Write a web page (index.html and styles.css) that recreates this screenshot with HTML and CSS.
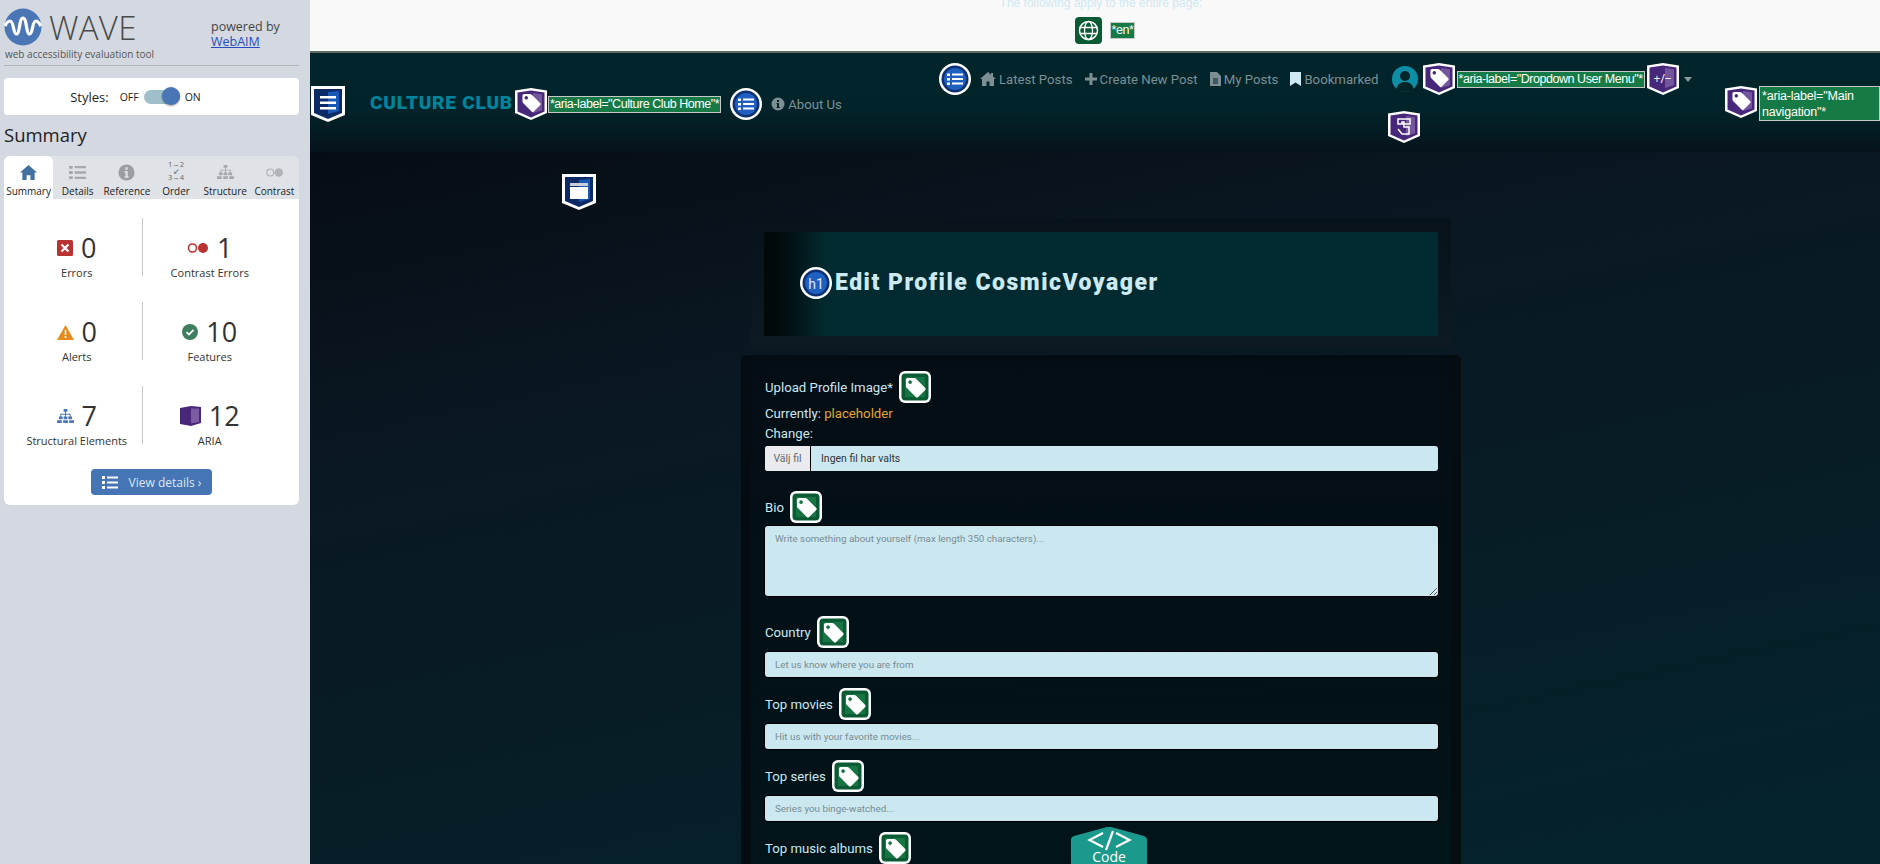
FILE: index.html
```html
<!DOCTYPE html>
<html lang="en">
<head>
<meta charset="utf-8">
<title>WAVE - Culture Club</title>
<link rel="stylesheet" href="styles.css">
</head>
<body>
<svg class="defs" width="0" height="0" aria-hidden="true">
  <defs>
    <path id="tagshape" fill-rule="evenodd" d="M9 7h7q1 0 2 1l10 10q1 1 0 2l-8 8q-1 1-2 0L8 18q-1-1-1-2V9q0-2 2-2zM11.500 9.500a2 2 0 1 0 .01 0z"/>
    <symbol id="shield-purple" viewBox="0 0 32 32">
      <path fill="#fff" d="M0 2.500 16 0l16 2.500V25l-16 7-16-7z"/>
      <path fill="#47277a" d="M2.500 4.500 16 2.500l13.500 2V23.500L16 29.500 2.500 23.500z"/>
      <path fill="#74569c" d="M18 5l9 1.200v16L18 25z"/>
    </symbol>
    <symbol id="shield-navy" viewBox="0 0 34 36">
      <path fill="#fff" d="M0 0h34v29l-17 7-17-7z"/>
      <path fill="#0c2a66" d="M3 3h28v24l-14 6-14-6z"/>
      <path fill="#1a58b5" d="M17 6l11-1v20l-11 3z"/>
    </symbol>
    <symbol id="circle-blue" viewBox="0 0 32 32">
      <circle cx="16" cy="16" r="16" fill="#fff"/>
      <circle cx="16" cy="16" r="13.500" fill="#0d2f73"/>
      <circle cx="16" cy="16" r="11" fill="#1f5fc0"/>
    </symbol>
    <symbol id="green-tag" viewBox="0 0 32 32">
      <rect x="0" y="0" width="32" height="32" rx="6" fill="#fff"/>
      <rect x="2.500" y="2.500" width="27" height="27" rx="4" fill="#0a5a33"/>
      <rect x="6" y="6" width="20" height="20" fill="#177443"/>
      <use href="#tagshape" fill="#fff" transform="translate(0.500 0.500) scale(.92)"/>
    </symbol>
    <symbol id="purple-tag" viewBox="0 0 32 32">
      <use href="#shield-purple" width="32" height="32"/>
      <use href="#tagshape" fill="#fff" transform="translate(1.500 0) scale(.85)"/>
    </symbol>
  </defs>
</svg>

<div class="layout">
  <aside class="sidebar">
    <header class="brandbar">
      <div class="wave-logo">
        <div class="wave-top">
          <svg class="wave-mark" viewBox="0 0 38 38"><circle cx="19" cy="19" r="18.500" fill="#4a76b6"/><path d="M1 18C3 14 4 13 6 13c4 0 3 13 6.500 13s2.500-16 6.500-16 3 16 6.500 16S28 13 32 13c2 0 3 2 5 5" fill="none" stroke="#fff" stroke-width="3.200"/></svg>
          <span class="wave-word">WAVE</span>
        </div>
        <div class="wave-sub">web accessibility evaluation tool</div>
      </div>
      <div class="powered">powered by<br><a href="#" class="powered-link">WebAIM</a></div>
    </header>
    <div class="styles-card">
      <span class="styles-label">Styles:</span>
      <span class="styles-state">OFF</span>
      <span class="toggle"><span class="knob"></span></span>
      <span class="styles-state">ON</span>
    </div>
    <h2 class="summary-title">Summary</h2>
    <nav class="tabs">
      <div class="tab tab-active">
        <svg class="tab-icon" viewBox="0 0 18 16"><path fill="#44709f" d="M9 0 0 8h2.500v8H7v-5h4v5h4.500V8H18z"/></svg>
        <span>Summary</span>
      </div>
      <div class="tab">
        <svg class="tab-icon" viewBox="0 0 18 16"><path fill="#a5a9ad" d="M0 1h4v3H0zM6 1h12v2.500H6zM0 6.500h4v3H0zM6 6.800h12v2.500H6zM0 12h4v3H0zM6 12.500h12V15H6z"/></svg>
        <span>Details</span>
      </div>
      <div class="tab">
        <svg class="tab-icon" viewBox="0 0 18 18"><circle cx="9" cy="9" r="8.500" fill="#9a9ea2"/><path fill="#e0e3e7" d="M7.800 3.500h2.400V6H7.800zM7 7.500h3.200V13h1v1.500H7V13h1V9H7z"/></svg>
        <span>Reference</span>
      </div>
      <div class="tab">
        <span class="order-icon">1→2<br>↙<br>3→4</span>
        <span>Order</span>
      </div>
      <div class="tab">
        <svg class="tab-icon" viewBox="0 0 18 16"><path fill="#a5a9ad" d="M7 0h4v3H7zM8.500 3h1v2h5v3h-1V6h-4v2h-1V6h-4v2h-1V5h5zM2 8h4v3H2zM7 8h4v3H7zM12 8h4v3h-4zM0 12h5v3H0zM6.500 12h5v3h-5zM13 12h5v3h-5z"/></svg>
        <span>Structure</span>
      </div>
      <div class="tab">
        <svg class="tab-icon" viewBox="0 0 18 10"><circle cx="4.500" cy="5" r="3.700" fill="none" stroke="#b0b4b8" stroke-width="1.200"/><circle cx="13.500" cy="5" r="4.500" fill="#b0b4b8"/></svg>
        <span>Contrast</span>
      </div>
    </nav>
    <section class="panel">
      <div class="stats">
        <div class="stat stat-left">
          <div class="stat-top">
            <svg class="stat-icon" viewBox="0 0 16 16"><rect width="16" height="16" rx="1.500" fill="#b93333"/><path stroke="#fff" stroke-width="2.200" d="M4.500 4.500l7 7M11.500 4.500l-7 7"/></svg>
            <span class="stat-num">0</span>
          </div>
          <div class="stat-label">Errors</div>
        </div>
        <div class="stat stat-right">
          <div class="stat-top">
            <svg class="stat-icon stat-icon-wide" viewBox="0 0 22 12"><circle cx="5.500" cy="6" r="4" fill="none" stroke="#b93333" stroke-width="1.600"/><circle cx="16" cy="6" r="5" fill="#b93333"/></svg>
            <span class="stat-num">1</span>
          </div>
          <div class="stat-label">Contrast Errors</div>
        </div>
        <div class="stat stat-left">
          <div class="stat-top">
            <svg class="stat-icon stat-icon-alert" viewBox="0 0 17 15"><path fill="#e68a1c" d="M8.500 0 17 15H0z"/><path fill="#fff" d="M7.700 5h1.600v5H7.700zM7.700 11h1.600v2H7.700z"/></svg>
            <span class="stat-num">0</span>
          </div>
          <div class="stat-label">Alerts</div>
        </div>
        <div class="stat stat-right">
          <div class="stat-top">
            <svg class="stat-icon" viewBox="0 0 16 16"><circle cx="8" cy="8" r="8" fill="#3f7f60"/><path d="M4.500 8.200l2.500 2.400 4.500-4.700" fill="none" stroke="#fff" stroke-width="1.800"/></svg>
            <span class="stat-num">10</span>
          </div>
          <div class="stat-label">Features</div>
        </div>
        <div class="stat stat-left">
          <div class="stat-top">
            <svg class="stat-icon stat-icon-alert" viewBox="0 0 18 16"><path fill="#4a76b6" d="M7 0h4v3H7zM8.500 3h1v2h5v3h-1V6h-4v2h-1V6h-4v2h-1V5h5zM2 8h4v3H2zM7 8h4v3H7zM12 8h4v3h-4zM0 12h5v3H0zM6.500 12h5v3h-5zM13 12h5v3h-5z"/></svg>
            <span class="stat-num">7</span>
          </div>
          <div class="stat-label">Structural Elements</div>
        </div>
        <div class="stat stat-right">
          <div class="stat-top">
            <svg class="stat-icon stat-icon-aria" viewBox="0 0 21 20"><path fill="#47277a" d="M0 2 11 0l10 1v16l-10 3-11-2z"/><path fill="#7b5ca3" d="M11 2.500h8V16l-8 1.500z"/></svg>
            <span class="stat-num">12</span>
          </div>
          <div class="stat-label">ARIA</div>
        </div>
      </div>
      <button class="details-btn" type="button">
        <svg class="details-icon" viewBox="0 0 16 13"><path fill="#fff" d="M0 0h3v3H0zM5 .500h11v2H5zM0 5h3v3H0zM5 5.500h11v2H5zM0 10h3v3H0zM5 10.500h11v2H5z"/></svg>
        View details ›
      </button>
    </section>
  </aside>

  <main class="page">
    <div class="doc-note">
      <p class="doc-note-text">The following apply to the entire page:</p>
      <div class="doc-note-row">
        <svg class="globe" viewBox="0 0 27 27"><rect width="27" height="27" rx="4" fill="#0a5a33"/><circle cx="13.500" cy="13.500" r="9" fill="none" stroke="#fff" stroke-width="1.500"/><ellipse cx="13.500" cy="13.500" rx="4" ry="9" fill="none" stroke="#fff" stroke-width="1.300"/><path stroke="#fff" stroke-width="1.300" d="M5 10.500h17M5 16.500h17"/></svg>
        <span class="wave-label">*en*</span>
      </div>
    </div>

    <nav class="topnav">
      <div class="nav-left">
        <svg class="nav-shield" viewBox="0 0 34 36" aria-hidden="true">
          <use href="#shield-navy" width="34" height="36"/>
          <path fill="#fff" d="M9 10h16v2.500H9zM9 15.500h16V18H9zM9 21h16v2.500H9z"/>
        </svg>
        <span class="brand">CULTURE CLUB</span>
        <svg class="shield-sm" aria-hidden="true"><use href="#purple-tag"/></svg>
        <span class="wave-label">*aria-label="Culture Club Home"*</span>
        <svg class="circle-icon" viewBox="0 0 32 32" aria-hidden="true">
          <use href="#circle-blue" width="32" height="32"/>
          <path fill="#fff" d="M8 10.500h3v2.500H8zM13 10.500h11v2H13zM8 15h3v2.500H8zM13 15h11v2H13zM8 19.500h3V22H8zM13 19.500h11v2H13z"/>
        </svg>
        <a class="nav-link nav-about" href="#">
          <svg class="nav-ico-info" viewBox="0 0 14 14"><circle cx="7" cy="7" r="6.500" fill="#7d8f94"/><path fill="#02252a" d="M6 3h2v2H6zM5.500 6H8v4h1v1H5.500v-1H6V7h-.5z"/></svg>
          About Us
        </a>
      </div>

      <div class="nav-menu">
        <svg class="circle-icon" viewBox="0 0 32 32" aria-hidden="true">
          <use href="#circle-blue" width="32" height="32"/>
          <path fill="#fff" d="M8 10.500h3v2.500H8zM13 10.500h11v2H13zM8 15h3v2.500H8zM13 15h11v2H13zM8 19.500h3V22H8zM13 19.500h11v2H13z"/>
        </svg>
        <a class="nav-link" href="#">
          <svg class="nav-ico-home" viewBox="0 0 16 14"><path fill="#7d8f94" d="M8 0 0 7h2v7h4.500V9.500h3V14H14V7h2l-3-2.600V1h-2v1.700z"/></svg>
          Latest Posts
        </a>
        <a class="nav-link" href="#">
          <svg class="nav-ico-plus" viewBox="0 0 12 12"><path fill="#7d8f94" d="M4.500 0h3v4.500H12v3H7.500V12h-3V7.500H0v-3h4.500z"/></svg>
          Create New Post
        </a>
        <a class="nav-link" href="#">
          <svg class="nav-ico-doc" viewBox="0 0 11 14"><path fill="#7d8f94" d="M0 0h7l4 4v10H0z"/><path stroke="#02252a" d="M3 7h5M3 9h5M3 11h5"/></svg>
          My Posts
        </a>
        <a class="nav-link" href="#">
          <svg class="nav-ico-mark" viewBox="0 0 11 14"><path fill="#cde9f2" d="M0 0h11v14l-5.500-3.500L0 14z"/></svg>
          Bookmarked
        </a>
        <svg class="avatar" viewBox="0 0 26 26"><circle cx="13" cy="13" r="13" fill="#0e8fa6"/><circle cx="13" cy="10" r="5" fill="#02252a"/><path fill="#02252a" d="M4 24c1-6 5-8 9-8s8 2 9 8c-2 1-5 2-9 2s-7-1-9-2z"/></svg>
        <svg class="shield-sm shield-dropdown" aria-hidden="true"><use href="#purple-tag"/></svg>
        <span class="wave-label">*aria-label="Dropdown User Menu"*</span>
        <span class="expander">
          <svg class="shield-sm" aria-hidden="true"><use href="#shield-purple"/></svg>
          <span class="expander-text">+/−</span>
        </span>
        <span class="caret"></span>
        <svg class="hand-badge" viewBox="0 0 32 32" aria-hidden="true">
          <use href="#shield-purple" width="32" height="32"/>
          <path fill="none" stroke="#fff" stroke-width="1.500" d="M10 8h12v5H10zM14 13v-2h2v5h5v7h-7l-4-5"/>
        </svg>
      </div>

      <div class="nav-aria">
        <svg class="shield-sm" aria-hidden="true"><use href="#purple-tag"/></svg>
        <span class="wave-label wave-label-block">*aria-label="Main navigation"*</span>
      </div>
    </nav>

    <div class="content">
      <svg class="region-badge" viewBox="0 0 34 36" aria-hidden="true">
        <use href="#shield-navy" width="34" height="36"/>
        <path fill="#c9cfdb" d="M8 9h18v3H8z"/>
        <path fill="#fff" d="M8 13h18v12H8z"/>
      </svg>

      <section class="hero">
        <div class="hero-inner">
          <svg class="circle-icon" viewBox="0 0 32 32" aria-hidden="true"><use href="#circle-blue" width="32" height="32"/></svg>
          <span class="h1-badge">h1</span>
          <h1 class="hero-title">Edit Profile CosmicVoyager</h1>
        </div>
      </section>

      <form class="form">
        <div class="field field-upload">
          <div class="label-row">
            <label class="field-label">Upload Profile Image*</label>
            <svg class="green-tag"><use href="#green-tag"/></svg>
          </div>
          <div class="currently">Currently: <a href="#" class="current-link">placeholder</a></div>
          <div class="change">Change:</div>
          <div class="file-input"><span class="file-btn">Välj fil</span><span class="file-name">Ingen fil har valts</span></div>
        </div>
        <div class="field field-bio">
          <div class="label-row">
            <label class="field-label">Bio</label>
            <svg class="green-tag"><use href="#green-tag"/></svg>
          </div>
          <textarea class="text-area" placeholder="Write something about yourself (max length 350 characters)..."></textarea>
        </div>
        <div class="field field-country">
          <div class="label-row">
            <label class="field-label">Country</label>
            <svg class="green-tag"><use href="#green-tag"/></svg>
          </div>
          <input class="text-input" placeholder="Let us know where you are from">
        </div>
        <div class="field">
          <div class="label-row">
            <label class="field-label">Top movies</label>
            <svg class="green-tag"><use href="#green-tag"/></svg>
          </div>
          <input class="text-input" placeholder="Hit us with your favorite movies...">
        </div>
        <div class="field">
          <div class="label-row">
            <label class="field-label">Top series</label>
            <svg class="green-tag"><use href="#green-tag"/></svg>
          </div>
          <input class="text-input" placeholder="Series you binge-watched...">
        </div>
        <div class="field">
          <div class="label-row">
            <label class="field-label">Top music albums</label>
            <svg class="green-tag"><use href="#green-tag"/></svg>
          </div>
        </div>
      </form>
    </div>

    <div class="code-tab">
      <svg class="code-shape" viewBox="0 0 76 37">
        <path fill="#1a998c" d="M0 37V13q0-3 3-4L36 0h4l33 9q3 1 3 4v24z"/>
        <path fill="none" stroke="#fff" stroke-width="2.200" d="M32 6 18.500 13 32 20M45 6l13.500 7L45 20M42 4l-7 19"/>
      </svg>
      <span class="code-word">Code</span>
    </div>
  </main>
</div>
</body>
</html>
```
FILE: styles.css
```css
* { box-sizing: border-box; }
html, body { margin: 0; height: 100%; overflow: hidden; }
body { font-family: Roboto, "Open Sans", sans-serif; background: #050e15; }
.defs { position: absolute; }
.layout { display: flex; height: 864px; }

/* WAVE sidebar */
.sidebar {
  flex: 0 0 310px;
  background: #d4d9e1;
  padding: 8px 11px 0 4px;
  font-family: "Open Sans", sans-serif;
  color: #333;
}
.brandbar {
  display: flex;
  height: 58px;
  border-bottom: 1px solid #b2b6b9;
}
.wave-logo { width: 207px; }
.wave-top { display: flex; align-items: center; gap: 7px; height: 38px; }
.wave-mark { width: 38px; height: 38px; }
.wave-word { font-size: 33px; font-weight: 300; color: #4a4a4a; line-height: 38px; letter-spacing: .3px; margin-top: 2px; }
.wave-sub { font-size: 10px; line-height: 15px; color: #555; margin: 1px 0 0 1px; white-space: nowrap; }
.powered { font-size: 12.500px; line-height: 15px; color: #444; margin-top: 11px; }
.powered-link { color: #2a4bc0; }
.styles-card {
  display: flex;
  align-items: center;
  justify-content: center;
  gap: 5px;
  height: 37px;
  margin-top: 12px;
  padding-right: 32px;
  background: #fff;
  border-radius: 4px;
  font-size: 13px;
  color: #222;
}
.styles-label { margin-right: 6px; }
.styles-state { font-size: 10.500px; }
.toggle { position: relative; width: 36px; height: 14px; background: #9fc0cb; border-radius: 7px; }
.knob {
  position: absolute;
  right: 0;
  top: -3px;
  width: 18px;
  height: 18px;
  border-radius: 50%;
  background: #4a76b6;
  box-shadow: 0 1px 2px rgba(0,0,0,.4);
}
.summary-title { margin: 4px 0 0; font-size: 18.500px; font-weight: 400; line-height: 32px; color: #222; }
.tabs {
  display: grid;
  grid-template-columns: repeat(6, 1fr);
  height: 43px;
  margin-top: 5px;
  background: #dfe2e6;
  border-radius: 6px 6px 0 0;
}
.tab {
  display: flex;
  flex-direction: column;
  align-items: center;
  justify-content: flex-end;
  gap: 3px;
  font-size: 10px;
  line-height: 14px;
  color: #222;
  white-space: nowrap;
  padding-bottom: 1px;
}
.tab-active { background: #fff; border-radius: 6px 6px 0 0; }
.tab-icon { width: 17px; height: 17px; }
.order-icon { font-size: 7.500px; line-height: 6.500px; height: 20px; color: #666; text-align: center; }
.panel { height: 306px; background: #fff; border-radius: 0 0 6px 6px; padding: 19px 0 0; }
.stats { display: grid; grid-template-columns: 138.500px 1fr; grid-auto-rows: 58px; row-gap: 26px; }
.stat { display: flex; flex-direction: column; align-items: center; justify-content: flex-start; }
.stat-left { border-right: 1px solid #c8c8c8; padding-left: 8px; }
.stat-right { padding-right: 22px; }
.stat-top { display: flex; align-items: center; gap: 8px; height: 30px; margin: 15px 0 3px; }
.stat-icon { width: 16px; height: 16px; }
.stat-icon-wide { width: 22px; height: 12px; }
.stat-icon-alert { width: 17px; height: 15px; }
.stat-icon-aria { width: 21px; height: 20px; }
.stat-num { font-size: 27px; line-height: 30px; color: #333; }
.stat-label { font-size: 11px; line-height: 14px; color: #333; white-space: nowrap; }
.details-btn {
  display: flex;
  align-items: center;
  justify-content: center;
  gap: 11px;
  width: 121px;
  height: 26px;
  margin: 25px 0 0 87px;
  padding: 0;
  border: 0;
  border-radius: 4px;
  background: #4575b4;
  color: #dfe8f3;
  font: 12px "Open Sans", sans-serif;
}
.details-icon { width: 16px; height: 13px; }

/* Page column */
.page { position: relative; flex: 1; min-width: 0; overflow: hidden; }
.doc-note {
  height: 53px;
  background: #f9f9f9;
  border-bottom: 2px solid #5f6a60;
  padding-left: 12px;
  display: flex;
  flex-direction: column;
  align-items: center;
  overflow: hidden;
}
.doc-note-text { margin: -4px 0 0; font: 12px/15px "Liberation Sans", sans-serif; color: #cfe8f2; white-space: nowrap; }
.doc-note-row { display: flex; align-items: center; gap: 8px; margin: 6px 0 0 8px; }
.globe { width: 27px; height: 27px; }
.wave-label {
  display: inline-block;
  background: #167a46;
  border: 1px solid #c8c8c8;
  color: #fff;
  font: 12.500px/13px "Liberation Sans", sans-serif;
  letter-spacing: -.45px;
  padding: 1px;
  white-space: nowrap;
}
.wave-label-block { flex: none; width: 121px; white-space: normal; line-height: 16px; padding: 1px 2px; height: 35px; letter-spacing: -.2px; }

.topnav {
  position: relative;
  display: flex;
  align-items: flex-start;
  height: 99px;
  background: linear-gradient(to bottom, #01252a 0, #01242a 55%, #07131c 100%);
}
.nav-left { display: flex; align-items: center; margin: 33px 0 0 1px; height: 36px; }
.nav-shield { width: 34px; height: 36px; }
.brand {
  font: 900 19px/24px Roboto, sans-serif;
  color: #02849c;
  letter-spacing: .8px;
  margin: -2px 0 0 25px;
  white-space: nowrap;
}
.shield-sm { width: 32px; height: 32px; flex: none; margin-left: 2px; }
.nav-left .wave-label { margin-left: 1px; }
.circle-icon { width: 32px; height: 32px; flex: none; }
.nav-left .circle-icon { margin-left: 9px; }
.nav-link {
  display: inline-flex;
  align-items: center;
  gap: 3px;
  font-size: 13.200px;
  color: #7d8f94;
  text-decoration: none;
  white-space: nowrap;
}
.nav-about { margin-left: 9px; }
.nav-ico-info { width: 14px; height: 14px; }
.nav-ico-home { width: 16px; height: 14px; }
.nav-ico-plus { width: 12px; height: 12px; }
.nav-ico-doc { width: 11px; height: 14px; }
.nav-ico-mark { width: 11px; height: 14px; }

.nav-menu {
  position: relative;
  display: flex;
  align-items: center;
  height: 36px;
  margin: 8px 0 0 97px;
}
.nav-menu .nav-link { margin-left: 12px; }
.nav-menu .circle-icon + .nav-link { margin-left: 9px; }
.avatar { width: 26px; height: 26px; margin: 0 0 0 13px; flex: none; }
.shield-dropdown { margin-left: 5px; }
.nav-menu .wave-label { margin-left: 2px; }
.expander { position: relative; width: 32px; height: 32px; margin-left: 2px; flex: none; }
.expander .shield-sm { margin: 0; display: block; }
.expander-text {
  position: absolute;
  inset: 0 0 2px;
  display: flex;
  align-items: center;
  justify-content: center;
  color: #fff;
  font: 12px "Open Sans", sans-serif;
}
.caret {
  margin-left: 5px;
  width: 0;
  height: 0;
  border: 4px solid transparent;
  border-top: 5px solid #8c989c;
  border-bottom: 0;
}
.hand-badge { position: absolute; left: 449px; top: 50px; width: 32px; height: 32px; }
.nav-aria { display: flex; align-items: flex-start; margin: 33px 0 0 31px; position: absolute; right: 0; }
.nav-aria .shield-sm { margin: 0 2px 0 0; }

/* Content */
.content {
  position: relative;
  height: 712px;
  padding: 66px 0 0 431px;
  background: linear-gradient(168deg, #060c13 0, #0a1722 28%, #04242c 100%);
}
.region-badge { position: absolute; left: 252px; top: 22px; width: 34px; height: 36px; }
.hero {
  width: 700px;
  margin-left: 10px;
  padding: 14px 13px 12px;
  background: linear-gradient(to bottom, #07121a, #0d1a24);
}
.hero-inner {
  position: relative;
  display: flex;
  align-items: center;
  height: 104px;
  padding: 0 0 2px 36px;
  background: linear-gradient(to right, #010808 0, #010d0f 3%, #022a30 9%, #022a30 100%);
}
.h1-badge {
  position: absolute;
  left: 36px;
  top: 36px;
  width: 32px;
  text-align: center;
  font-size: 14px;
  line-height: 32px;
  color: #dfeaf7;
}
.hero-title {
  margin: 0 0 0 3px;
  font: 900 23px/30px Roboto, sans-serif;
  letter-spacing: 1.500px;
  color: #cde9f2;
  white-space: nowrap;
}
.form {
  width: 720px;
  height: 520px;
  margin-top: 7px;
  padding: 16px 23px 0 24px;
  background: linear-gradient(to bottom, #040d14, #02141a);
  border-radius: 5px 5px 0 0;
  box-shadow: inset 10px 0 0 #040c11, inset -10px 0 0 #050d10;
}
.field { height: 72px; }
.field-upload { height: 120px; }
.field-bio { height: 125px; }
.field-country { height: 72px; }
.label-row { display: flex; align-items: center; gap: 6px; height: 32px; }
.field-label, .currently, .change { font-size: 13.200px; color: #cbe8f1; white-space: nowrap; }
.currently { line-height: 20px; margin-top: 1px; }
.change { line-height: 20px; }
.current-link { color: #e4a72b; text-decoration: none; }
.green-tag { width: 32px; height: 32px; flex: none; }
.file-input {
  display: flex;
  height: 25px;
  margin-top: 2px;
  border-radius: 3px;
  overflow: hidden;
  background: #cbe8f1;
  font-size: 10.500px;
  line-height: 25px;
}
.file-btn { width: 46px; text-align: center; background: #e9ebef; color: #666; border-right: 1px solid #000; }
.file-name { padding-left: 10px; color: #333; }
.text-area, .text-input {
  display: block;
  width: 100%;
  border: 0;
  border-radius: 3px;
  background: #cbe8f1;
  padding: 0 10px;
  font: 9.800px Roboto, sans-serif;
  color: #333;
  box-shadow: 0 0 0 1px #000;
}
.text-area { height: 70px; margin-top: 3px; padding-top: 7px; resize: vertical; }
.text-input { height: 25px; margin-top: 4px; }
.text-area::placeholder, .text-input::placeholder { color: #7a8b92; opacity: 1; }

.code-tab {
  position: absolute;
  left: 761px;
  bottom: 0;
  width: 76px;
  height: 37px;
  text-align: center;
  color: #fff;
}
.code-shape { position: absolute; inset: 0; width: 76px; height: 37px; }
.code-word {
  position: absolute;
  left: 0;
  right: 0;
  top: 21px;
  font: 14px/17px "Open Sans", sans-serif;
}
```
